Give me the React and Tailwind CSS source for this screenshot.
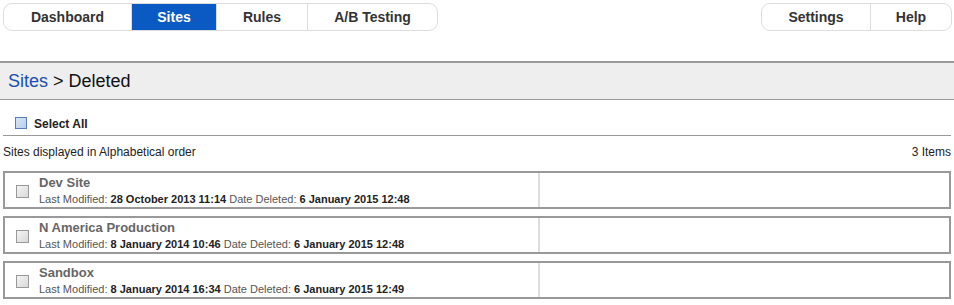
import React from 'react'

const tabs = [
  { label: 'Dashboard', w: 'w-[128px]' },
  { label: 'Sites', w: 'w-[85px]', active: true },
  { label: 'Rules', w: 'w-[91px]' },
  { label: 'A/B Testing', w: 'w-[129px]' },
]

const sites = [
  { name: 'Dev Site', modified: '28 October 2013 11:14', deleted: '6 January 2015 12:48' },
  { name: 'N America Production', modified: '8 January 2014 10:46', deleted: '6 January 2015 12:48' },
  { name: 'Sandbox', modified: '8 January 2014 16:34', deleted: '6 January 2015 12:49' },
]

function Tab({ label, w, active, last }) {
  return (
    <div
      className={`${w} flex items-center justify-center text-[14px] font-bold ${
        active ? 'bg-[#0b5ac4] text-white' : 'text-[#333]'
      } ${last ? '' : 'border-r border-[#ddd]'}`}
    >
      {label}
    </div>
  )
}

export default function App() {
  return (
    <div className="w-[954px] h-[305px] bg-white text-[#222] font-['Liberation_Sans',Arial,sans-serif] overflow-hidden">
      {/* top nav */}
      <div className="flex justify-between pl-[3px] pr-[2px] pt-[3px]">
        <div className="flex h-[28px] border border-[#ddd] rounded-[9px] overflow-hidden">
          {tabs.map((t, i) => (
            <Tab key={t.label} {...t} last={i === tabs.length - 1} />
          ))}
        </div>
        <div className="flex h-[28px] border border-[#ddd] rounded-[9px] overflow-hidden">
          <Tab label="Settings" w="w-[109px]" />
          <Tab label="Help" w="w-[80px]" last />
        </div>
      </div>

      {/* title band */}
      <div className="mt-[30px] h-[39px] bg-[#eee] border-t-2 border-b border-[#999] flex items-center px-[8px] text-[18px]">
        <span className="text-[#1a4fb0]">Sites</span>
        <span className="ml-[5px] text-[#111]">&gt; Deleted</span>
      </div>

      {/* select all */}
      <div className="mx-[3px] mt-[16px] h-[20px] border-b border-[#999] flex items-start pl-[12px]">
        <span className="mt-[1px] w-[12px] h-[12px] border border-[#5b7fb3] bg-gradient-to-br from-[#d7e6f7] to-[#b8d0ee]" />
        <span className="ml-[7px] text-[12px] font-bold leading-[14px] mt-[1px]">Select All</span>
      </div>

      <div className="mx-[3px] mt-[9px] flex justify-between text-[12px] leading-[14px]">
        <span>Sites displayed in Alphabetical order</span>
        <span>3 Items</span>
      </div>

      {/* rows */}
      <div className="mx-[3px] mt-[12px] flex flex-col gap-[7px]">
        {sites.map((s) => (
          <div key={s.name} className="h-[38px] border-2 border-[#999] flex">
            <div className="w-[535px] border-r-2 border-[#ddd] flex items-center">
              <span className="ml-[11px] w-[13px] h-[13px] border border-[#999] bg-gradient-to-br from-[#f4f4f4] to-[#d9d9d9] mt-[2px]" />
              <div className="ml-[10px] flex flex-col">
                <span className="text-[13px] font-bold text-[#666] leading-[15px]">{s.name}</span>
                <span className="text-[11px] text-[#555] leading-[13px] mt-[3px]">
                  Last Modified: <b className="text-[#222]">{s.modified}</b> Date Deleted:{' '}
                  <b className="text-[#222]">{s.deleted}</b>
                </span>
              </div>
            </div>
            <div className="flex-1" />
          </div>
        ))}
      </div>
    </div>
  )
}
